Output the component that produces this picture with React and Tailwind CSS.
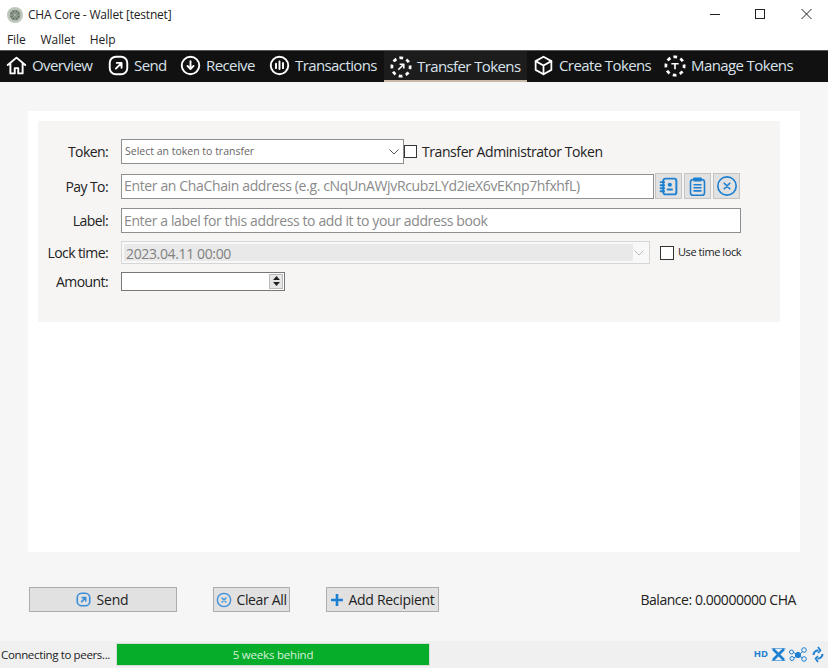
import React from "react";

const Ic = ({ s = 20, c = "#fff", w = 2, children, className = "" }) => (
  <svg width={s} height={s} viewBox="0 0 24 24" fill="none" stroke={c} strokeWidth={w} strokeLinecap="round" strokeLinejoin="round" className={className}>{children}</svg>
);
const CircleX = ({ s = 20, c = "#1c7fd0", w = 2 }) => (
  <Ic s={s} c={c} w={w}><circle cx="12" cy="12" r="10" /><path d="M9 9l6 6M15 9l-6 6" /></Ic>
);
const SendIc = ({ s = 20, c = "#fff", w = 2.2 }) => (
  <Ic s={s} c={c} w={w}><rect x="2" y="2" width="20" height="20" rx="7" /><path d="M9 15.5l6-6M10 9h5.5v5.5" /></Ic>
);
const Dashed = ({ children }) => (
  <svg width="22" height="22" viewBox="0 0 24 24" fill="none" stroke="#fff" strokeWidth="3" strokeLinejoin="round">
    <circle cx="12" cy="12" r="10" strokeDasharray="4 3.85" transform="rotate(-100 12 12)" />
    {children}
  </svg>
);

const tabs = [
  { t: "Overview", w: "w-[101px] pl-[6px]", i: <Ic s={21} w={2.2}><path d="M2 11.5L12 3l10 8.5M5 9.5V21h5v-6h4v6h5V9.5" /></Ic> },
  { t: "Send", w: "w-[72px] pl-[7px]", i: <SendIc s={21} /> },
  { t: "Receive", w: "w-[89px] pl-[7px]", i: <Ic s={21} w={2.2}><circle cx="12" cy="12" r="10" /><path d="M12 7v9M8.5 12.5L12 16l3.5-3.5" /></Ic> },
  { t: "Transactions", w: "w-[122px] pl-[7px]", i: <Ic s={21} w={2.2}><circle cx="12" cy="12" r="10" /><path d="M8 10v5M12 7.5V16M16 9v6" /></Ic> },
  { t: "Transfer Tokens", active: true, w: "w-[143px] pl-[6px]", i: <Dashed><path d="M9 15l6-6M10.5 9H15v4.5" strokeWidth="1.8" /></Dashed> },
  { t: "Create Tokens", w: "w-[130px] pl-[6px]", i: <Ic s={21} w={2}><path d="M12 2l9 5v10l-9 5-9-5V7z" /><path d="M3 7l9 5 9-5M12 12v10" /></Ic> },
  { t: "Manage Tokens", w: "w-[171px] pl-[7px]", i: <Dashed><path d="M8 9.5h8M12 9.5v6" strokeWidth="1.8" /></Dashed> },
];

const Label = ({ children, className = "" }) => (
  <div className={`w-[70px] shrink-0 whitespace-nowrap text-right text-[14px] tracking-[-0.6px] text-[#222] ${className}`}>{children}</div>
);
const SmallBtn = ({ children }) => (
  <div className="flex h-[26px] w-[27px] items-center justify-center border border-[#c4c4c4] bg-[#e1e1e1]">{children}</div>
);
const ActionBtn = ({ children, className = "" }) => (
  <div className={`flex h-[25px] items-center justify-center gap-[4px] whitespace-nowrap border border-[#adadad] bg-[#e1e1e1] text-[14px] text-[#222] ${className}`}>{children}</div>
);
const Chevron = ({ c }) => (
  <svg width="10" height="6" viewBox="0 0 10 6" fill="none" stroke={c} strokeWidth="1"><path d="M0.5 0.5L5 5l4.5-4.5" /></svg>
);

export default function App() {
  return (
    <div className="flex h-[668px] w-[828px] flex-col overflow-hidden bg-[#f6f6f6] text-[#222]" style={{ fontFamily: '"Open Sans", sans-serif' }}>
      {/* title bar */}
      <div className="flex h-[30px] shrink-0 items-center bg-white pl-[7px]">
        <svg width="16" height="16" viewBox="0 0 16 16">
          <circle cx="8" cy="8" r="8" fill="#bcc6b9" />
          <circle cx="8" cy="8" r="5.2" fill="#6f7a70" />
          <path d="M8 3v10M3 8h10M4.5 4.5l7 7M11.5 4.5l-7 7" stroke="#a3ada1" strokeWidth="1" />
        </svg>
        <span className="ml-[5px] text-[12px] tracking-[-0.2px] text-[#222]">CHA Core - Wallet [testnet]</span>
        <div className="ml-auto flex items-center">
          <svg width="45" height="28" viewBox="0 0 45 28" stroke="#222" fill="none"><path d="M7 13.5h10" /></svg>
          <svg width="45" height="28" viewBox="0 0 45 28" stroke="#222" fill="none"><rect x="7.5" y="8.5" width="9" height="9" /></svg>
          <svg width="46" height="28" viewBox="0 0 46 28" stroke="#222" fill="none" className="mr-[-11px]"><path d="M8.5 8l10 10M18.5 8l-10 10" /></svg>
        </div>
      </div>
      {/* menu */}
      <div className="flex h-[20px] shrink-0 items-center gap-[15px] bg-white pl-[7px] text-[12px] tracking-[-0.1px] text-[#222]">
        <span>File</span><span>Wallet</span><span>Help</span>
      </div>
      {/* toolbar */}
      <div className="flex h-[32px] shrink-0 items-stretch border-t border-[#555] bg-[#111]">
        {tabs.map((x) => (
          <div key={x.t} className={`flex shrink-0 items-center gap-[5px] whitespace-nowrap text-[15px] tracking-[-0.6px] text-[#d9e2ea] ${x.w} ${x.active ? "border-b-2 border-[#c9b9a6] bg-[#1c1c1c] pt-[2px]" : "pb-[2px]"}`}>
            {x.i}
            <span>{x.t}</span>
          </div>
        ))}
      </div>
      {/* body */}
      <div className="mx-[28px] mt-[29px] h-[441px] shrink-0 bg-white pl-[10px] pr-[20px] pt-[10px]">
        <div className="flex h-[201px] flex-col bg-[#f6f5f4] pt-[18px]">
          <div className="flex h-[25px] items-center">
            <Label>Token:</Label>
            <div className="ml-[13px] flex h-[25px] w-[283px] items-center justify-between border border-[#8f8f8f] bg-white pl-[3px] pr-[4px] pt-px text-[10.5px] text-[#666]">
              <span>Select an token to transfer</span>
              <Chevron c="#555" />
            </div>
            <div className="h-[13px] w-[13px] border border-[#333] bg-white" />
            <span className="ml-[5px] whitespace-nowrap text-[14px] tracking-[-0.42px] text-[#222]">Transfer Administrator Token</span>
          </div>
          <div className="mt-[9px] flex h-[26px] items-center">
            <Label>Pay To:</Label>
            <div className="ml-[13px] flex h-[25px] w-[533px] items-center whitespace-nowrap border border-[#8f8f8f] bg-white pb-[2px] pl-[2px] text-[14px] tracking-[-0.36px] text-[#8a8a8a]">
              Enter an ChaChain address (e.g. cNqUnAWjvRcubzLYd2ieX6vEKnp7hfxhfL)
            </div>
            <div className="ml-[1px] flex gap-[2px]">
              <SmallBtn>
                <Ic s={21} c="#1c7fd0" w={2.2}><rect x="6" y="3" width="15" height="18" rx="2.5" /><path d="M3 7h4M3 10.5h4M3 14h4M3 17.5h4" /><circle cx="13.5" cy="10" r="1.3" fill="#1c7fd0" /><path d="M11 15.5h5" /></Ic>
              </SmallBtn>
              <SmallBtn>
                <Ic s={21} c="#1c7fd0" w={1.8}><rect x="4" y="4" width="16" height="18" rx="3" /><path d="M8 2.5h8v3H8zM8 10h8M8 13.5h8M8 17h8" /></Ic>
              </SmallBtn>
              <SmallBtn><CircleX s={22} w={1.8} /></SmallBtn>
            </div>
          </div>
          <div className="mt-[9px] flex h-[25px] items-center">
            <Label>Label:</Label>
            <div className="ml-[13px] flex h-[25px] w-[620px] items-center whitespace-nowrap border border-[#8f8f8f] bg-white pl-[2px] text-[14px] tracking-[-0.38px] text-[#8a8a8a]">
              Enter a label for this address to add it to your address book
            </div>
          </div>
          <div className="mt-[8px] flex h-[23px] items-center">
            <Label>Lock time:</Label>
            <div className="ml-[13px] flex h-[23px] w-[529px] items-center justify-between border border-[#d6d6d6] bg-[#f8f8f8] p-[2px] pr-[5px]">
              <div className="flex h-full w-[509px] items-center bg-[#e9e9e9] pl-[2px] pt-[2px] text-[14px] tracking-[-0.36px] text-[#808080]">2023.04.11 00:00</div>
              <Chevron c="#bbb" />
            </div>
            <div className="ml-[10px] h-[14px] w-[14px] border border-[#333] bg-white" />
            <span className="ml-[4px] whitespace-nowrap text-[11px] tracking-[-0.43px] text-[#222]">Use time lock</span>
          </div>
          <div className="mt-[7px] flex h-[20px] items-center">
            <Label>Amount:</Label>
            <div className="ml-[13px] flex h-[19px] w-[164px] items-center justify-end border border-[#777] bg-white pr-[1px]">
              <div className="flex h-[15px] w-[14px] flex-col items-center justify-center gap-[2px] border border-[#bbb] bg-[#e6e6e6]">
                <svg width="7" height="4" viewBox="0 0 7 4"><path d="M3.5 0L7 4H0z" fill="#222" /></svg>
                <svg width="7" height="4" viewBox="0 0 7 4"><path d="M3.5 4L7 0H0z" fill="#222" /></svg>
              </div>
            </div>
          </div>
        </div>
      </div>
      {/* actions */}
      <div className="mt-[35px] flex h-[25px] shrink-0 items-center pl-[29px] pr-[32px]">
        <ActionBtn className="w-[148px] pr-[2px]"><SendIc s={15} c="#3b8fd8" w={2.6} /><span className="ml-[2px] tracking-[-0.2px]">Send</span></ActionBtn>
        <ActionBtn className="ml-[36px] w-[77px]"><CircleX s={16} c="#3b8fd8" /><span className="tracking-[-0.35px]">Clear All</span></ActionBtn>
        <ActionBtn className="ml-[36px] w-[113px] gap-[6px] tracking-[-0.3px]">
          <svg width="12" height="12" viewBox="0 0 12 12" fill="#1c7fd0"><path d="M4.7 0h2.6v4.7H12v2.6H7.3V12H4.7V7.3H0V4.7h4.7z" /></svg>
          <span>Add Recipient</span>
        </ActionBtn>
        <span className="ml-auto whitespace-nowrap text-[14px] tracking-[-0.45px] text-[#222]">Balance: 0.00000000 CHA</span>
      </div>
      {/* status */}
      <div className="mt-[29px] flex h-[27px] shrink-0 items-center bg-[#f0f0f0]">
        <span className="w-[116px] shrink-0 whitespace-nowrap pl-[1px] text-[11.5px] tracking-[-0.35px] text-[#222]">Connecting to peers...</span>
        <div className="flex h-[23px] w-[314px] items-center justify-center border border-[#d4dcd4] bg-[#06ad2b] text-[11.5px] tracking-[-0.2px] text-[#d8f0dc]">5 weeks behind</div>
        <div className="ml-auto flex items-center pr-[4px]">
          <span className="mr-[3px] text-[9.5px] font-bold text-[#1c7fd0]">HD</span>
          <svg width="15" height="15" viewBox="0 0 15 15" fill="none" stroke="#1c7fd0"><path d="M0.5 1.5h14M0.5 13.5h14" strokeWidth="1" opacity="0.6" /><path d="M2 2l11 11M13 2L2 13" strokeWidth="2.6" /></svg>
          <svg width="18" height="15" viewBox="0 0 18 15" fill="none" stroke="#1c7fd0" strokeWidth="1" className="ml-[3px]"><circle cx="2.5" cy="5" r="2" /><circle cx="3" cy="11.5" r="2" /><circle cx="9" cy="8" r="2.6" fill="#1c7fd0" /><circle cx="15" cy="3" r="2.3" /><circle cx="15" cy="12" r="2.3" /><path d="M4.5 5.5l3 1.5M5 11l2-1.5M11 7l2.5-2.5M11 9.5l2.5 1.5" /></svg>
          <svg width="12" height="17" viewBox="0 0 12 17" fill="none" stroke="#1c7fd0" strokeWidth="2" className="ml-[5px]"><path d="M1.5 9a4.5 4.5 0 0 1 5-4.5M10.5 8a4.5 4.5 0 0 1-5 4.5" /><path d="M6 1l2.5 3.5L6 7M6 10l-2.5 2.5L6 16" strokeWidth="1.6" /></svg>
        </div>
      </div>
    </div>
  );
}
